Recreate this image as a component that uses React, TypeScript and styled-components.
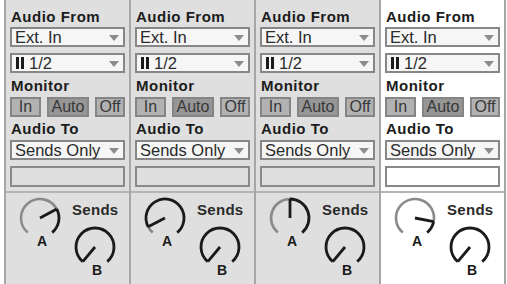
import React from "react";
import styled, { createGlobalStyle } from "styled-components";

const Global = createGlobalStyle`
  html, body { margin: 0; padding: 0; background: #ffffff; }
  body { font-family: "Liberation Sans", Arial, sans-serif; }
`;

const Mixer = styled.div`
  display: flex;
  margin-left: 4px;
  height: 284px;
`;

const Strip = styled.div<{ $active: boolean; $last: boolean }>`
  width: 123px;
  display: flex;
  flex-direction: column;
  border-left: 2px solid #a6a6a6;
  border-right: ${(p) => (p.$last ? "2px solid #a6a6a6" : "none")};
  background: ${(p) => (p.$active ? "#ffffff" : "#dfdfdf")};
`;

const Routing = styled.div`
  display: flex;
  flex-direction: column;
  padding: 8px 4px 4px 4px;
`;

const Label = styled.div<{ $mt?: number }>`
  font-weight: bold;
  font-size: 15px;
  line-height: 17px;
  color: #1c1c1c;
  margin-top: ${(p) => p.$mt ?? 0}px;
  margin-left: 1px;
  letter-spacing: 0.5px;
`;

const Select = styled.div<{ $mt?: number }>`
  height: 20px;
  box-sizing: border-box;
  border: 2px solid #878787;
  background: #f6f6f6;
  display: flex;
  align-items: center;
  padding: 0 4px 0 3px;
  margin-top: ${(p) => p.$mt ?? 0}px;
  font-size: 16.5px;
  color: #2a2a2a;
`;

const SelectText = styled.span`
  flex: 1;
  display: flex;
  align-items: center;
  gap: 5px;
  white-space: nowrap;
`;

const Bars = styled.span`
  display: inline-flex;
  gap: 2px;
  height: 12px;
  margin-left: 1px;
  & > i {
    width: 3px;
    height: 100%;
    background: #1a1a1a;
  }
`;

const Arrow = styled.span`
  width: 0;
  height: 0;
  border-left: 5px solid transparent;
  border-right: 5px solid transparent;
  border-top: 6px solid #8c8c8c;
  margin-top: 2px;
`;

const ButtonRow = styled.div`
  display: flex;
  justify-content: space-between;
  margin-top: 3px;
`;

const MonButton = styled.div<{ $on?: boolean; $w: number }>`
  width: ${(p) => p.$w}px;
  height: 20px;
  box-sizing: border-box;
  border: 2px solid #858585;
  background: ${(p) => (p.$on ? "#969696" : "#b2b2b2")};
  color: #383838;
  font-size: 16px;
  display: flex;
  align-items: center;
  justify-content: center;
`;

const EmptyBox = styled.div<{ $active: boolean }>`
  height: 21px;
  box-sizing: border-box;
  border: 2px solid #8a8a8a;
  background: ${(p) => (p.$active ? "#ffffff" : "#dfdfdf")};
  margin-top: 6px;
`;

const Sends = styled.div`
  flex: 1;
  border-top: 2px solid #b4b4b4;
  display: grid;
  grid-template-columns: 55px 1fr;
  grid-template-rows: 29px 1fr;
  padding: 3px 0 0 10px;
`;

const SendsTitle = styled.div`
  grid-column: 2;
  grid-row: 1;
  font-weight: bold;
  font-size: 15px;
  line-height: 17px;
  color: #2a2a2a;
  padding-left: 1px;
  padding-top: 5px;
  letter-spacing: 0.3px;
`;

const KnobA = styled.div`
  grid-column: 1;
  grid-row: 1 / span 2;
`;

const KnobB = styled.div`
  grid-column: 2;
  grid-row: 2;
`;

function polar(cx: number, cy: number, r: number, deg: number) {
  const a = ((deg - 90) * Math.PI) / 180;
  return [cx + r * Math.cos(a), cy + r * Math.sin(a)];
}

function arc(cx: number, cy: number, r: number, a0: number, a1: number) {
  const [x0, y0] = polar(cx, cy, r, a0);
  const [x1, y1] = polar(cx, cy, r, a1);
  const large = a1 - a0 > 180 ? 1 : 0;
  return `M ${x0} ${y0} A ${r} ${r} 0 ${large} 1 ${x1} ${y1}`;
}

function Knob({ value, label }: { value: number; label: string }) {
  const cx = 24;
  const cy = 22;
  const r = 19;
  const min = -140;
  const max = 140;
  const v = min + (max - min) * value;
  const [nx, ny] = polar(cx, cy, r, v);
  return (
    <svg width="48" height="54" viewBox="0 0 48 54">
      {value > 0.001 && (
        <path d={arc(cx, cy, r, min, v)} fill="none" stroke="#8a8a8a" strokeWidth="2.6" />
      )}
      <path d={arc(cx, cy, r, v, max)} fill="none" stroke="#1a1a1a" strokeWidth="2.8" />
      <line x1={cx} y1={cy} x2={nx} y2={ny} stroke="#1a1a1a" strokeWidth="2.8" />
      <text
        x={cx + 2}
        y={cy + 28}
        textAnchor="middle"
        fontFamily="Liberation Sans, Arial, sans-serif"
        fontWeight="bold"
        fontSize="14"
        fill="#1a1a1a"
      >
        {label}
      </text>
    </svg>
  );
}

const strips = [
  { a: 0.72, active: false },
  { a: 0.08, active: false },
  { a: 0.5, active: false },
  { a: 0.86, active: true },
];

export default function App() {
  return (
    <>
      <Global />
      <Mixer>
        {strips.map((s, i) => (
          <Strip key={i} $active={s.active} $last={i === strips.length - 1}>
            <Routing>
              <Label>Audio From</Label>
              <Select $mt={2}>
                <SelectText>Ext. In</SelectText>
                <Arrow />
              </Select>
              <Select $mt={6}>
                <SelectText>
                  <Bars>
                    <i />
                    <i />
                  </Bars>
                  1/2
                </SelectText>
                <Arrow />
              </Select>
              <Label $mt={4}>Monitor</Label>
              <ButtonRow>
                <MonButton $w={31}>In</MonButton>
                <MonButton $w={42} $on>
                  Auto
                </MonButton>
                <MonButton $w={30}>Off</MonButton>
              </ButtonRow>
              <Label $mt={3}>Audio To</Label>
              <Select $mt={3}>
                <SelectText>Sends Only</SelectText>
                <Arrow />
              </Select>
              <EmptyBox $active={s.active} />
            </Routing>
            <Sends>
              <KnobA>
                <Knob value={s.a} label="A" />
              </KnobA>
              <SendsTitle>Sends</SendsTitle>
              <KnobB>
                <Knob value={0} label="B" />
              </KnobB>
            </Sends>
          </Strip>
        ))}
      </Mixer>
    </>
  );
}
